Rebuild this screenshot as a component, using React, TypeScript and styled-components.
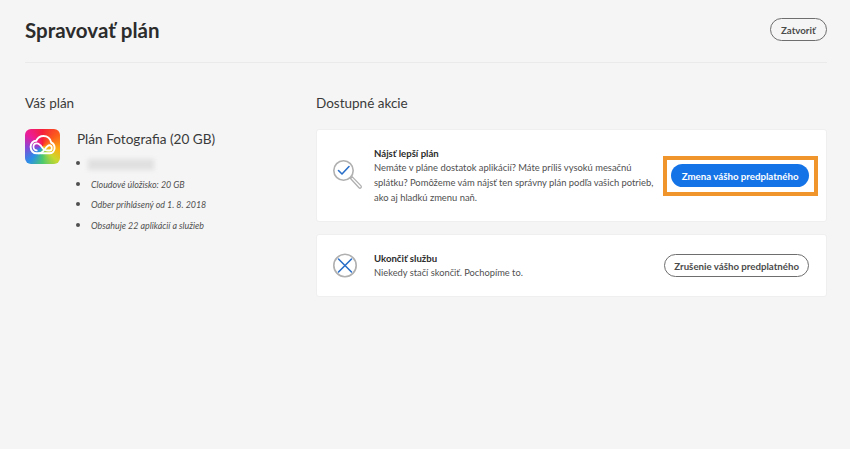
import styled, { createGlobalStyle } from "styled-components";

const GlobalStyle = createGlobalStyle`
  html, body {
    margin: 0;
    background: #f5f5f5;
    font-family: "Lato", "Open Sans", sans-serif;
    color: #2c2c2c;
  }
`;

const Page = styled.div`
  width: 850px;
  height: 449px;
  box-sizing: border-box;
  padding: 0 23px 0 25px;
  overflow: hidden;
`;

const Header = styled.header`
  height: 63px;
  display: flex;
  align-items: center;
  justify-content: space-between;
  border-bottom: 1px solid #eaeaea;
  padding-bottom: 3px;
  box-sizing: border-box;
`;

const Title = styled.h1`
  margin: 0;
  font-size: 20.5px;
  font-weight: 700;
  color: #2c2c2c;
`;

const Pill = styled.button<{ $primary?: boolean }>`
  height: 23px;
  padding: 0 ${(p) => (p.$primary ? 10.5 : 9)}px;
  border-radius: 12px;
  border: ${(p) => (p.$primary ? "none" : "1.5px solid #6e6e6e")};
  background: ${(p) => (p.$primary ? "#1473e6" : "transparent")};
  color: ${(p) => (p.$primary ? "#fff" : "#4b4b4b")};
  font-family: inherit;
  font-size: 9.7px;
  font-weight: 700;
  white-space: nowrap;
  box-sizing: border-box;
`;

const CloseButton = styled(Pill)`
  padding: 0 10.5px;
`;

const Columns = styled.main`
  display: grid;
  grid-template-columns: 291px 1fr;
  padding-top: 31px;
`;

const SectionTitle = styled.h2`
  margin: 0 0 17px;
  font-size: 13.5px;
  line-height: 18px;
  font-weight: 400;
  color: #3a3a3a;
`;

const PlanRow = styled.div`
  display: flex;
  gap: 17px;
`;

const PlanName = styled.div`
  font-size: 13.6px;
  line-height: 20px;
  margin-bottom: 4px;
  color: #3a3a3a;
`;

const Details = styled.ul`
  margin: 0;
  padding: 0 0 0 14px;
  list-style: disc;
  font-size: 8.9px;
  font-style: italic;
  color: #505050;
`;

const Detail = styled.li`
  height: 20.7px;
  line-height: 20.7px;

  &::marker {
    font-size: 12px;
  }
`;

const Blurred = styled.span`
  display: inline-block;
  width: 66px;
  height: 11px;
  margin-left: -3px;
  vertical-align: middle;
  background: #e0e0e0;
  filter: blur(2px);
`;

const LogoTile = styled.div`
  width: 35px;
  height: 35px;
  flex: none;
  border-radius: 6px;
  overflow: hidden;
  background: conic-gradient(
    from 0deg at 50% 50%,
    #f5203c 0deg,
    #fb5a1c 50deg,
    #fdae14 100deg,
    #c8d82e 135deg,
    #4cc96e 180deg,
    #2b8fe8 222deg,
    #8a46d4 268deg,
    #ec1c98 310deg,
    #f5203c 360deg
  );
`;

const Cards = styled.div`
  display: flex;
  flex-direction: column;
  gap: 12px;
`;

const Card = styled.section<{ $height: number }>`
  height: ${(p) => p.$height}px;
  display: flex;
  align-items: center;
  box-sizing: border-box;
  padding: 0 17px 0 16px;
  background: #fff;
  border-radius: 3px;
  border: 1px solid #efefef;
`;

const CardIcon = styled.div`
  width: 30px;
  flex: none;
  margin-right: 11px;
  display: flex;
`;

const CardBody = styled.div<{ $size: number }>`
  flex: 1;
  font-size: ${(p) => p.$size}px;
  line-height: 15px;
  color: #505050;
`;

const CardTitle = styled.div`
  font-size: 9.6px;
  font-weight: 700;
  color: #2c2c2c;
  margin-bottom: -1px;
`;

const Highlighted = styled.div`
  position: relative;
  flex: none;
  display: flex;

  &::after {
    content: "";
    position: absolute;
    inset: -8px -9px -9px -8px;
    border: 4px solid #f0952c;
    pointer-events: none;
  }
`;

const CloudLogo = () => (
  <LogoTile>
    <svg width="35" height="35" viewBox="0 0 35 35">
      <g
        transform="translate(-0.5 -3.2) scale(1.02 1.08)"
        fill="none"
        stroke="#fff"
        strokeLinecap="round"
        strokeLinejoin="round"
      >
        <path
          d="M12 25.500C8.500 25.500 6 22.800 6 19.500C6 16.300 8.500 13.800 11.500 13.800C13 11.200 15.500 9.500 18.500 9.500C22.500 9.500 25.500 12 26.200 15.500C28.300 16.300 29.500 18.200 29.500 20.500C29.500 23.300 27.300 25.500 24.500 25.500Z"
          strokeWidth="1.900"
        />
        <path
          d="M12 22.800C10.200 22.800 8.800 21.300 8.800 19.500C8.800 17.700 10.200 16.300 12 16.300C15 16.300 16.500 19 18 21C19.500 23 21.500 22.900 24.500 22.900C25.800 22.900 26.800 21.800 26.800 20.500C26.800 19.100 25.800 18 24.300 18C21 18 19.500 25.500 14 25.500"
          strokeWidth="1.700"
        />
      </g>
    </svg>
  </LogoTile>
);

const SearchCheckIcon = () => (
  <svg width="30" height="32" viewBox="0 0 30 32">
    <circle cx="10.500" cy="10.500" r="9.700" fill="#fff" stroke="#b0b0b0" strokeWidth="1.600" />
    <path d="M5.500 10.500l3.500 3.500 7-7.500" fill="none" stroke="#2a6fc9" strokeWidth="1.600" strokeLinecap="round" strokeLinejoin="round" />
    <path d="M17.500 18.500l1.800-1.600 8.700 9a1.300 1.300 0 0 1-2 1.800z" fill="#fff" stroke="#b0b0b0" strokeWidth="1.300" />
  </svg>
);

const CancelIcon = () => (
  <svg width="25" height="25" viewBox="0 0 25 25">
    <circle cx="12" cy="12.500" r="11.200" fill="#fff" stroke="#b0b0b0" strokeWidth="1.600" />
    <path d="M5.500 6l13 13M18.500 6l-13 13" fill="none" stroke="#2a6fc9" strokeWidth="1.600" strokeLinecap="round" />
  </svg>
);

export default function App() {
  return (
    <>
      <GlobalStyle />
      <Page>
        <Header>
          <Title>Spravovať plán</Title>
          <CloseButton>Zatvoriť</CloseButton>
        </Header>
        <Columns>
          <div>
            <SectionTitle>Váš plán</SectionTitle>
            <PlanRow>
              <CloudLogo />
              <div>
                <PlanName>Plán Fotografia (20 GB)</PlanName>
                <Details>
                  <Detail>
                    <Blurred />
                  </Detail>
                  <Detail>Cloudové úložisko: 20 GB</Detail>
                  <Detail>Odber prihlásený od 1. 8. 2018</Detail>
                  <Detail>Obsahuje 22 aplikácií a služieb</Detail>
                </Details>
              </div>
            </PlanRow>
          </div>
          <div>
            <SectionTitle>Dostupné akcie</SectionTitle>
            <Cards>
              <Card $height={93}>
                <CardIcon>
                  <SearchCheckIcon />
                </CardIcon>
                <CardBody $size={9.4}>
                  <CardTitle>Nájsť lepší plán</CardTitle>
                  Nemáte v pláne dostatok aplikácií? Máte príliš vysokú mesačnú
                  <br />
                  splátku? Pomôžeme vám nájsť ten správny plán podľa vašich potrieb,
                  <br />
                  ako aj hladkú zmenu naň.
                </CardBody>
                <Highlighted>
                  <Pill $primary>Zmena vášho predplatného</Pill>
                </Highlighted>
              </Card>
              <Card $height={63}>
                <CardIcon>
                  <CancelIcon />
                </CardIcon>
                <CardBody $size={9.3}>
                  <CardTitle>Ukončiť službu</CardTitle>
                  Niekedy stačí skončiť. Pochopíme to.
                </CardBody>
                <Pill>Zrušenie vášho predplatného</Pill>
              </Card>
            </Cards>
          </div>
        </Columns>
      </Page>
    </>
  );
}
